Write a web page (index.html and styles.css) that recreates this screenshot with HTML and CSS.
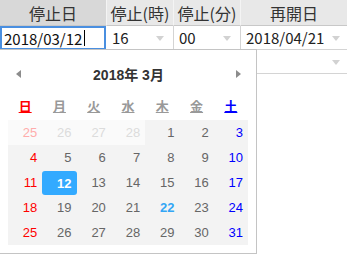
FILE: index.html
```html
<!DOCTYPE html>
<html lang="ja">
<head>
  <meta charset="UTF-8">
  <title>停止・再開日</title>
  <link rel="stylesheet" href="styles.css">
</head>
<body>
  <div class="sheet">
    <div class="row head">
      <div class="cell c1 active">停止日</div>
      <div class="cell c2">停止(時)</div>
      <div class="cell c3">停止(分)</div>
      <div class="cell c4">再開日</div>
    </div>
    <div class="row">
      <div class="cell c1 editing">2018/03/12<span class="caret"></span></div>
      <div class="cell c2">16<span class="drop"></span></div>
      <div class="cell c3">00<span class="drop"></span></div>
      <div class="cell c4">2018/04/21<span class="drop"></span></div>
    </div>
    <div class="row">
      <div class="cell c1"></div>
      <div class="cell c2"></div>
      <div class="cell c3"></div>
      <div class="cell c4"><span class="drop"></span></div>
    </div>

    <div class="calendar">
      <div class="cal-nav">
        <span class="arrow prev-month"></span>
        <span class="cal-title">2018年&nbsp;3月</span>
        <span class="arrow next-month"></span>
      </div>
      <div class="weekdays">
        <abbr class="sun">日</abbr>
        <abbr>月</abbr>
        <abbr>火</abbr>
        <abbr>水</abbr>
        <abbr>木</abbr>
        <abbr>金</abbr>
        <abbr class="sat">土</abbr>
      </div>
      <div class="days">
        <span class="day prev sun">25</span>
        <span class="day prev">26</span>
        <span class="day prev">27</span>
        <span class="day prev">28</span>
        <span class="day">1</span>
        <span class="day">2</span>
        <span class="day sat">3</span>

        <span class="day sun">4</span>
        <span class="day">5</span>
        <span class="day">6</span>
        <span class="day">7</span>
        <span class="day">8</span>
        <span class="day">9</span>
        <span class="day sat">10</span>

        <span class="day sun">11</span>
        <span class="day selected">12</span>
        <span class="day">13</span>
        <span class="day">14</span>
        <span class="day">15</span>
        <span class="day">16</span>
        <span class="day sat">17</span>

        <span class="day sun">18</span>
        <span class="day">19</span>
        <span class="day">20</span>
        <span class="day">21</span>
        <span class="day today">22</span>
        <span class="day">23</span>
        <span class="day sat">24</span>

        <span class="day sun">25</span>
        <span class="day">26</span>
        <span class="day">27</span>
        <span class="day">28</span>
        <span class="day">29</span>
        <span class="day">30</span>
        <span class="day sat">31</span>
      </div>
    </div>
  </div>
</body>
</html>
```

FILE: styles.css
```css
  html, body {
    height: 100%;
  }

  body {
    margin: 0;
    background-color: #fff;
    font-family: "Noto Sans CJK JP", "Liberation Sans", sans-serif;
    color: #222;
  }

  .sheet {
    position: relative;
    width: 347px;
    min-height: 256px;
  }

  .row {
    display: grid;
    grid-template-columns: 107px 67px 67px 106px;
    height: 24px;
  }

  .cell {
    position: relative;
    box-sizing: border-box;
    display: flex;
    align-items: center;
    padding: 0 5px;
    font-size: 15px;
    line-height: 1;
    border-right: 1px solid #d4d4d4;
    border-bottom: 1px solid #d4d4d4;
    white-space: nowrap;
  }

  .cell.c4 {
    border-right: none;
  }

  .row.head {
    height: 26px;
  }

  .head .cell {
    justify-content: center;
    padding: 0;
    font-size: 16px;
    color: #333;
    background-color: #e8e8e8;
    border-right-color: #f4f4f4;
    border-bottom-color: #c8c8c8;
  }

  .head .cell.active {
    background-color: #d8d8d8;
  }

  .cell.editing {
    padding-left: 2px;
    border: 2px solid #4a8fe0;
    margin-right: 1px;
    color: #111;
  }

  .caret {
    display: inline-block;
    width: 0;
    height: 16px;
    margin-left: 2px;
    border-left: 1px solid #000;
  }

  .drop {
    position: absolute;
    right: 9px;
    top: 10px;
    width: 0;
    height: 0;
    border-left: 4px solid transparent;
    border-right: 4px solid transparent;
    border-top: 5px solid #d2d2d2;
  }

  .c4 .drop {
    right: 7px;
  }

  /* calendar popup */
  .calendar {
    position: absolute;
    left: -1px;
    top: 49px;
    z-index: 2;
    width: 240px;
    padding: 8px;
    background-color: #fff;
    border: 1px solid #c4c4c4;
    font-family: "Liberation Sans", "Noto Sans CJK JP", sans-serif;
  }

  .cal-nav {
    display: flex;
    align-items: center;
    justify-content: space-between;
    height: 32px;
  }

  .cal-title {
    font-size: 14px;
    font-weight: bold;
    color: #333;
  }

  .arrow {
    width: 0;
    height: 0;
    border-top: 4px solid transparent;
    border-bottom: 4px solid transparent;
  }

  .prev-month {
    margin-left: 8px;
    border-right: 5px solid #8c8c8c;
  }

  .next-month {
    margin-right: 7px;
    border-left: 5px solid #8c8c8c;
  }

  .weekdays {
    display: grid;
    grid-template-columns: repeat(7, 1fr);
    height: 30px;
    align-items: center;
    text-align: center;
  }

  .weekdays abbr {
    font-size: 13px;
    font-weight: bold;
    color: #999;
    text-decoration: underline;
  }

  .weekdays .sun {
    color: #f00;
  }

  .weekdays .sat {
    color: #00f;
  }

  .days {
    display: grid;
    grid-template-columns: repeat(7, 1fr);
    grid-auto-rows: 25px;
    background-color: #f3f3f3;
  }

  .day {
    display: flex;
    align-items: center;
    justify-content: flex-end;
    padding-right: 5px;
    font-size: 13px;
    color: #666;
  }

  .day.sun {
    color: #f00;
  }

  .day.sat {
    color: #00f;
  }

  .day.prev {
    background-color: #fafafa;
    color: #dcdcdc;
  }

  .day.prev.sun {
    color: #ffacac;
  }

  .day.today {
    color: #33a6f5;
    font-weight: bold;
  }

  .day.selected {
    margin: 1px 0 0;
    background-color: #33aaff;
    border-radius: 3px;
    color: #fff;
    font-weight: bold;
  }
```
